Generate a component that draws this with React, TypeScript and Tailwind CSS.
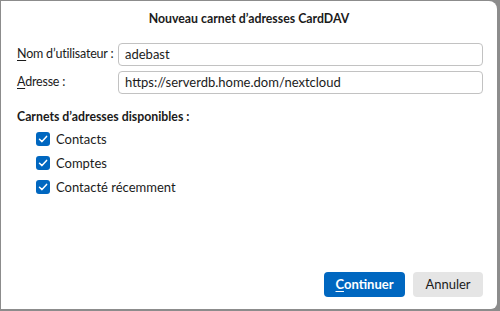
import React from 'react';

const font = { fontFamily: 'Lato, "Noto Sans", sans-serif' };

function Check({ label }: { label: string }) {
  return (
    <label className="flex items-center gap-[6px] h-[24px] shrink-0">
      <span className="flex items-center justify-center w-[14px] h-[14px] rounded-[3px] bg-[#0067c0]">
        <svg width="10" height="10" viewBox="0 0 10 10">
          <path d="M1.5 5.2 L4 7.6 L8.6 2.4" fill="none" stroke="#fff" strokeWidth="1.5" strokeLinecap="round" strokeLinejoin="round" />
        </svg>
      </span>
      <span>{label}</span>
    </label>
  );
}

export default function App() {
  return (
    <div className="w-[500px] h-[311px] bg-[#8c8c8c] pl-[1px] pt-[1px] pr-[3px] pb-[2px]" style={font}>
      <div className="h-full bg-white rounded-tr-[8px] rounded-br-[6px] flex flex-col text-[13px] text-[#1b1b1b] whitespace-nowrap">
        <div className="text-center font-bold text-[12.3px] pt-[9px] h-[36px]">Nouveau carnet d’adresses CardDAV</div>

        <div className="grid grid-cols-[101px_1fr] gap-y-[5px] items-center pl-[16px] pr-[14px] pt-[6px]">
          <span className="text-[12.5px] tracking-[-0.2px]"><span className="underline underline-offset-2">N</span>om d’utilisateur :</span>
          <div className="h-[23px] border border-[#c2c2c2] rounded-[4px] flex items-center px-[6px]">adebast</div>
          <span className="text-[12.5px] tracking-[-0.2px]"><span className="underline underline-offset-2">A</span>dresse :</span>
          <div className="h-[23px] border border-[#c2c2c2] rounded-[4px] flex items-center px-[6px]">https://serverdb.home.dom/nextcloud</div>
        </div>

        <div className="pl-[16px] pt-[14px] font-bold text-[12.3px]">Carnets d’adresses disponibles :</div>
        <div className="pl-[35px] pt-[1px] flex flex-col">
          <Check label="Contacts" />
          <Check label="Comptes" />
          <Check label="Contacté récemment" />
        </div>

        <div className="mt-auto flex justify-end gap-[8px] pr-[14px] pb-[12px]">
          <button className="w-[81px] h-[25px] rounded-[4px] bg-[#0067c0] text-white font-bold">
            <span className="underline underline-offset-2">C</span>ontinuer
          </button>
          <button className="w-[70px] h-[25px] rounded-[4px] bg-[#e5e5e5] text-[#1b1b1b]">Annuler</button>
        </div>
      </div>
    </div>
  );
}
